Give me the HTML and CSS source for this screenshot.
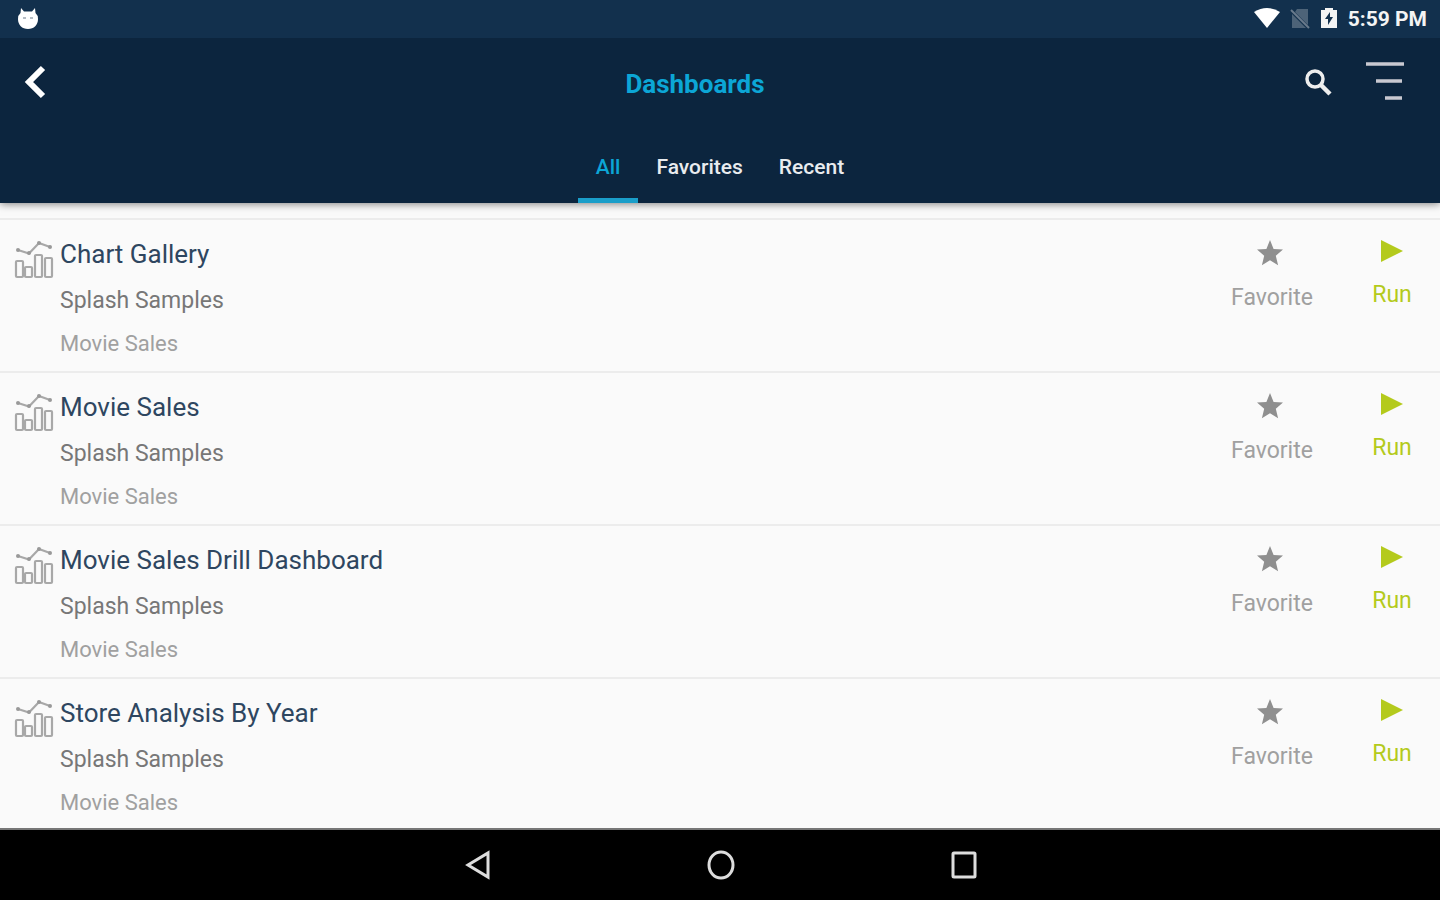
FILE: index.html
```html
<!DOCTYPE html>
<html lang="en">
<head>
<meta charset="utf-8">
<meta name="viewport" content="width=device-width, initial-scale=1">
<title>Dashboards</title>
<link rel="stylesheet" href="styles.css">
</head>
<body>
<svg class="sprite" aria-hidden="true">
  <symbol id="chart" viewBox="0 0 40 40">
    <g fill="none" stroke="#a8a8a8" stroke-width="2.200">
      <path d="M4 10l11 3.500L25 3l11 4"/>
      <rect x="2" y="21" width="7" height="16" rx="1"/>
      <rect x="11" y="27" width="7" height="10" rx="1"/>
      <rect x="21" y="15" width="7" height="22" rx="1"/>
      <rect x="31" y="18" width="7" height="19" rx="1"/>
    </g>
    <g fill="#999"><circle cx="4" cy="10" r="2"/><circle cx="15" cy="13" r="2"/><circle cx="25" cy="3" r="2"/><circle cx="36" cy="7" r="2"/></g>
  </symbol>
  <symbol id="star" viewBox="0 0 26 26">
    <path fill="#8f8f8f" d="M13 0l3.600 8.900 9.400.7-7.200 6.200 2.300 9.400L13 20.200l-8.100 5 2.300-9.400L0 9.600l9.400-.7z"/>
  </symbol>
  <symbol id="play" viewBox="0 0 24 24">
    <path fill="#b4ca1c" d="M1 1l22 11L1 23z"/>
  </symbol>
</svg>
<div class="screen">
  <header class="header">
    <div class="status">
      <svg class="status-app" width="22" height="22" viewBox="0 0 22 22" aria-hidden="true"><path fill="#fff" d="M4 0l3 3.500h8L18 0l.5 5Q21 7 21 11c0 6-4 10-10 10S1 17 1 11q0-4 2.500-6z"/><path stroke="#b4bcc4" stroke-width="2" d="M6 10h3M13 10h3"/></svg>
      <div class="status-icons">
        <svg width="28" height="22" viewBox="0 0 28 22" aria-hidden="true"><path fill="#fff" d="M2 4Q15-4 28 4L15 20z"/></svg>
        <svg width="20" height="22" viewBox="0 0 20 22" aria-hidden="true"><path fill="#4d6378" d="M7 1h11v16L5 4zM2 6l14 14H2z"/><path stroke="#6a7b8c" stroke-width="2" d="M1 2l18 18"/></svg>
        <svg width="18" height="22" viewBox="0 0 18 22" aria-hidden="true"><path fill="#f4f4f4" d="M1 2h4V0h8v2h4v18H1z"/><path fill="#12304d" d="M10 4l-5 7h3v6l5-8h-3z"/></svg>
        <span class="clock">5:59 PM</span>
      </div>
    </div>
    <div class="appbar">
      <button class="icon-button" aria-label="Back"><svg width="24" height="34" viewBox="0 0 24 34"><path fill="none" stroke="#fff" stroke-width="6" d="M19 3L5 17l14 14"/></svg></button>
      <h1 class="title">Dashboards</h1>
      <div class="tools">
        <button class="icon-button" aria-label="Search"><svg width="28" height="28" viewBox="0 0 28 28"><circle cx="11" cy="11" r="8" fill="none" stroke="#eee" stroke-width="3.500"/><path stroke="#eee" stroke-width="4.500" d="M17 17l9 9"/></svg></button>
        <button class="icon-button" aria-label="Sort"><svg width="40" height="40" viewBox="0 0 40 40"><path stroke="#c9c9d1" stroke-width="3.500" d="M0 2h38M10 19h26M19 36h17"/></svg></button>
      </div>
    </div>
    <nav class="tabs">
      <button class="tab tab-active">All</button>
      <button class="tab">Favorites</button>
      <button class="tab">Recent</button>
    </nav>
  </header>
  <main class="content">
    <ul class="list">
      <li class="item">
        <svg class="item-icon" aria-hidden="true"><use href="#chart"/></svg>
        <div class="item-text"><h2 class="item-name">Chart Gallery</h2><p class="item-folder">Splash Samples</p><p class="item-source">Movie Sales</p></div>
        <button class="action favorite"><svg width="26" height="26"><use href="#star"/></svg>Favorite</button>
        <button class="action run"><svg width="24" height="24"><use href="#play"/></svg>Run</button>
      </li>
      <li class="item">
        <svg class="item-icon" aria-hidden="true"><use href="#chart"/></svg>
        <div class="item-text"><h2 class="item-name">Movie Sales</h2><p class="item-folder">Splash Samples</p><p class="item-source">Movie Sales</p></div>
        <button class="action favorite"><svg width="26" height="26"><use href="#star"/></svg>Favorite</button>
        <button class="action run"><svg width="24" height="24"><use href="#play"/></svg>Run</button>
      </li>
      <li class="item">
        <svg class="item-icon" aria-hidden="true"><use href="#chart"/></svg>
        <div class="item-text"><h2 class="item-name">Movie Sales Drill Dashboard</h2><p class="item-folder">Splash Samples</p><p class="item-source">Movie Sales</p></div>
        <button class="action favorite"><svg width="26" height="26"><use href="#star"/></svg>Favorite</button>
        <button class="action run"><svg width="24" height="24"><use href="#play"/></svg>Run</button>
      </li>
      <li class="item">
        <svg class="item-icon" aria-hidden="true"><use href="#chart"/></svg>
        <div class="item-text"><h2 class="item-name">Store Analysis By Year</h2><p class="item-folder">Splash Samples</p><p class="item-source">Movie Sales</p></div>
        <button class="action favorite"><svg width="26" height="26"><use href="#star"/></svg>Favorite</button>
        <button class="action run"><svg width="24" height="24"><use href="#play"/></svg>Run</button>
      </li>
    </ul>
  </main>
  <nav class="navbar">
    <button class="icon-button" aria-label="System back"><svg width="28" height="32" viewBox="0 0 28 32"><path fill="none" stroke="#ddd" stroke-width="3" d="M25 4v24L5 16z"/></svg></button>
    <button class="icon-button" aria-label="Home"><svg width="30" height="32" viewBox="0 0 30 32"><ellipse cx="16" cy="16" rx="12" ry="13" fill="none" stroke="#ddd" stroke-width="3"/></svg></button>
    <button class="icon-button" aria-label="Overview"><svg width="28" height="32" viewBox="0 0 28 32"><rect x="4" y="4" width="22" height="24" rx="1" fill="none" stroke="#ddd" stroke-width="3"/></svg></button>
  </nav>
</div>
</body>
</html>
```
FILE: styles.css
```css
* {
  box-sizing: border-box;
}

body {
  margin: 0;
  font-family: Roboto, "Liberation Sans", sans-serif;
  background: #fafafa;
}

h1, h2, p, ul {
  margin: 0;
  padding: 0;
  font-weight: 400;
}

button {
  padding: 0;
  border: 0;
  background: none;
  font: inherit;
  color: inherit;
  cursor: pointer;
}

svg {
  display: block;
}

.sprite {
  position: absolute;
  width: 0;
  height: 0;
}

.screen {
  display: flex;
  flex-direction: column;
  height: 100vh;
}

.header {
  position: relative;
  background: #0c253e;
  box-shadow: 0 1px 8px rgba(0, 0, 0, 0.5);
}

.status {
  display: flex;
  align-items: center;
  justify-content: space-between;
  height: 38px;
  padding: 0 13px 0 17px;
  background: #12304d;
}

.status-icons {
  display: flex;
  align-items: center;
  gap: 10px;
}

.clock {
  font-size: 21px;
  font-weight: 700;
  line-height: 38px;
  color: #f4f4f4;
}

.appbar {
  display: grid;
  grid-template-columns: 62px 1fr 102px;
  align-items: center;
  height: 88px;
  padding: 0 34px 0 24px;
}

.icon-button {
  justify-self: start;
}

.title {
  padding-top: 4px;
  font-size: 26px;
  font-weight: 700;
  line-height: 36px;
  text-align: center;
  color: #0ca6d6;
}

.tools {
  display: flex;
  align-items: center;
  justify-content: flex-end;
  gap: 34px;
}

.tabs {
  display: flex;
  justify-content: center;
  height: 77px;
}

.tab {
  padding: 10px 18px 0;
  border-bottom: 5px solid transparent;
  font-size: 21px;
  font-weight: 500;
  color: #e9ecef;
}

.tab-active {
  border-color: #1a9ec9;
  color: #0ca6d6;
}

.content {
  flex: 1;
  min-height: 0;
  padding-top: 15px;
  overflow: hidden;
}

.list {
  list-style: none;
}

.item {
  display: flex;
  align-items: flex-start;
  padding: 12px 14px 7px 14px;
  border-top: 2px solid #ececec;
}

.item-icon {
  width: 40px;
  height: 40px;
  margin: 8px 6px 0 0;
}

.item-text {
  flex: 1;
}

.item-name {
  margin-bottom: 3px;
  font-size: 26px;
  line-height: 44px;
  color: #2e4660;
}

.item-folder {
  font-size: 23px;
  line-height: 44px;
  color: #777;
}

.item-source {
  font-size: 22px;
  line-height: 41px;
  color: #a0a0a0;
}

.action {
  display: flex;
  flex-direction: column;
  align-items: center;
  gap: 17px;
  padding-top: 8px;
  font-size: 23px;
  line-height: 30px;
}

.favorite {
  width: 84px;
  margin-right: 44px;
  color: #a0a0a0;
}

.favorite svg {
  margin-right: 4px;
}

.run {
  width: 68px;
  padding-top: 7px;
  color: #b4ca1c;
}

.navbar {
  display: flex;
  align-items: center;
  justify-content: center;
  gap: 214px;
  height: 72px;
  border-top: 2px solid #777;
  background: #000;
}
```
